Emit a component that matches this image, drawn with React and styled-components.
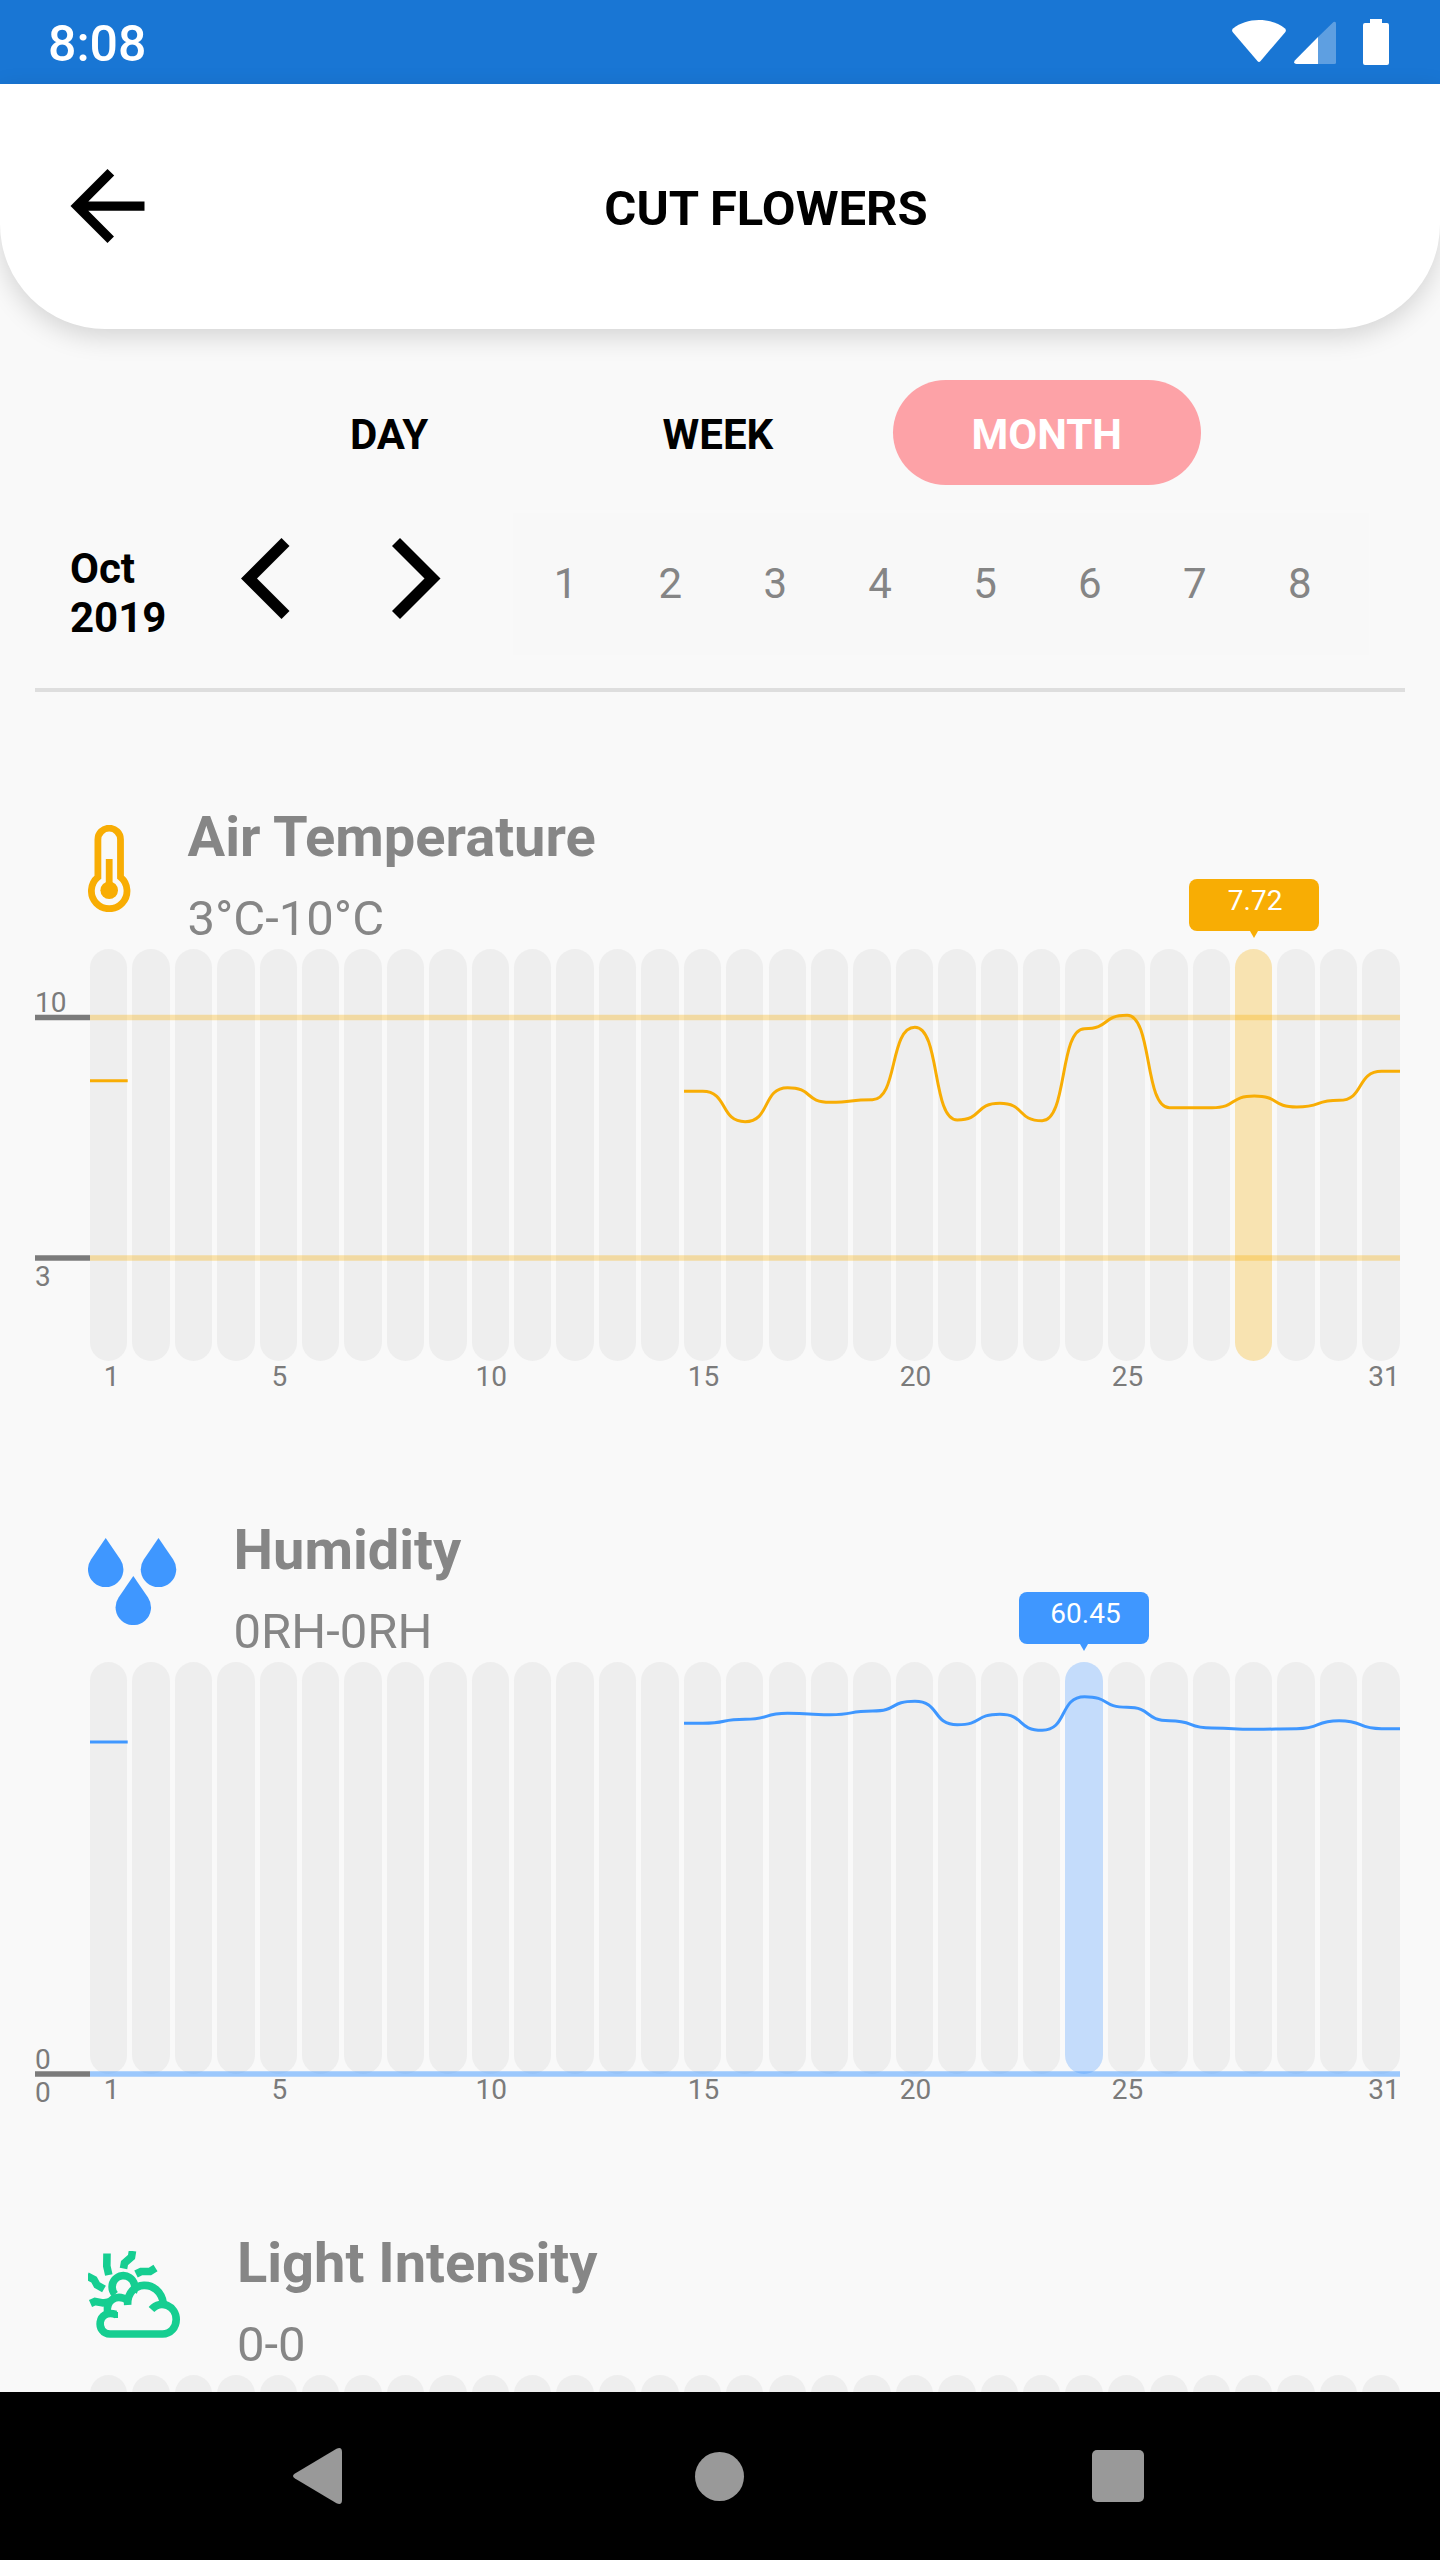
import React from 'react';
import styled, { createGlobalStyle } from 'styled-components';

const BAR_PITCH = 42.43;
const BAR_WIDTH = 37.4;
const PLOT_WIDTH = 1310.3;
const PLOT_HEIGHT = 412;

const GlobalStyle = createGlobalStyle`
  * {
    box-sizing: border-box;
  }

  body {
    margin: 0;
    background: #f9f9f9;
    font-family: Roboto, 'Liberation Sans', sans-serif;
  }

  svg {
    display: block;
    flex-shrink: 0;
  }
`;

const Screen = styled.div`
  display: flex;
  flex-direction: column;
  width: 1440px;
  height: 2560px;
  overflow: hidden;
  background: #f9f9f9;
`;

const StatusBar = styled.div`
  display: flex;
  flex-shrink: 0;
  justify-content: space-between;
  height: 84px;
  padding: 0 51px 0 48px;
  color: #fff;
  background: #1976d4;
`;

const Clock = styled.div`
  padding-top: 15px;
  font-size: 50px;
  font-weight: 500;
  line-height: 58px;
`;

const StatusIcons = styled.div`
  display: flex;
  gap: 8px;
  padding-top: 19px;
`;

const Header = styled.header`
  display: flex;
  align-items: center;
  flex-shrink: 0;
  height: 245px;
  padding: 0 70px 1px;
  background: #fff;
  border-radius: 0 0 105px 105px;
  box-shadow: 0 8px 26px rgba(0, 0, 0, 0.15);
`;

const HeaderTitle = styled.h1`
  flex: 1;
  margin: 5px 0 0 17px;
  font-size: 49px;
  font-weight: 700;
  line-height: 58px;
  text-align: center;
`;

const Tabs = styled.div`
  display: flex;
  flex-shrink: 0;
  gap: 20.5px;
  margin-top: 51px;
  padding-left: 235px;
`;

const Tab = styled.div`
  width: 308.3px;
  height: 105px;
  padding-top: 1px;
  border-radius: 53px;
  color: ${({ $active }) => ($active ? '#fff' : '#000')};
  background: ${({ $active }) => ($active ? '#fda2a7' : 'transparent')};
  font-size: 42px;
  font-weight: 700;
  line-height: 108px;
  text-align: center;
`;

const DateBar = styled.div`
  display: flex;
  flex-shrink: 0;
  height: 207px;
  margin: 0 35px;
  border-bottom: 4px solid #dedede;
  padding: 28px 0 0 35px;
`;

const Month = styled.div`
  width: 171px;
  padding-top: 31px;
  font-size: 42px;
  font-weight: 700;
  line-height: 49px;
`;

const MonthArrows = styled.div`
  display: flex;
  gap: 102px;
  width: 272px;
  padding-top: 25px;
`;

const Days = styled.div`
  display: flex;
  width: 856px;
  height: 142px;
  background: #f8f8f8;
`;

const DayNumber = styled.div`
  width: 104.9px;
  padding-top: 46px;
  color: #858585;
  font-size: 42px;
  line-height: 50px;
  text-align: center;
`;

const Content = styled.main`
  flex: 1;
  min-height: 0;
  overflow: hidden;
`;

const Section = styled.section`
  height: 713px;
`;

const SectionHead = styled.div`
  display: flex;
  align-items: flex-start;
  gap: 57px;
  height: 257px;
  padding: 112px 0 0 88px;
  color: #868686;

  & > svg {
    margin-top: 21px;
  }
`;

const SectionTitle = styled.h2`
  margin: 0;
  font-size: 56px;
  font-weight: 700;
  line-height: 66px;
`;

const SectionRange = styled.div`
  margin-top: 20px;
  font-size: 49px;
  line-height: 58px;
`;

const Plot = styled.div`
  position: relative;
  width: ${PLOT_WIDTH}px;
  height: ${PLOT_HEIGHT}px;
  margin-left: 90px;
`;

const Columns = styled.div`
  display: grid;
  grid-template-columns: repeat(31, ${BAR_WIDTH}px);
  column-gap: ${BAR_PITCH - BAR_WIDTH}px;
`;

const Bar = styled.div`
  position: relative;
  height: ${PLOT_HEIGHT}px;
  border-radius: 19px;
  background: ${({ $fill }) => $fill || '#eee'};
`;

const Overlay = styled.svg`
  position: absolute;
  top: 0;
  left: -55px;
`;

const LimitLabel = styled.div`
  position: absolute;
  left: -55px;
  color: #7b7b7b;
  font-size: 28px;
  line-height: 32px;
`;

const Tooltip = styled.div`
  position: absolute;
  top: -70px;
  left: 50%;
  width: 130px;
  height: 52px;
  margin-left: -65px;
  border-radius: 8px;
  color: #fff;
  background: ${({ $color }) => $color};
  font-size: 28px;
  line-height: 43px;
  text-align: center;
  text-indent: 3px;

  &::after {
    content: '';
    position: absolute;
    top: 52px;
    left: 61px;
    border: 4px solid transparent;
    border-top: 7px solid ${({ $color }) => $color};
    border-bottom: 0;
  }
`;

const AxisLabel = styled.div`
  display: flex;
  justify-content: center;
  padding-left: ${({ $edge }) => ($edge ? 6 : 2)}px;
  color: #7b7b7b;
  font-size: 28px;
  line-height: 32px;
`;

const Axis = styled(Columns)`
  width: ${PLOT_WIDTH}px;
  margin-left: 90px;
`;

const NavBar = styled.nav`
  display: flex;
  align-items: center;
  flex-shrink: 0;
  height: 168px;
  padding-left: 293px;
  background: #000;
`;

const HomeButton = styled.div`
  width: 49px;
  height: 49px;
  margin: 0 348px 0 353px;
  border-radius: 50%;
  background: #999;
`;

const RecentsButton = styled.div`
  width: 52px;
  height: 52px;
  border-radius: 5px;
  background: #999;
`;

const WifiIcon = () => (
  <svg width="54" height="46" viewBox="0 0 54 46" fill="#fff">
    <path d="M1 9.5C8 4 17 1 27 1s19 3 26 8.5q1.6 1.5.4 3.4L28.6 42q-1.6 1.8-3.2 0L.6 12.9Q-.6 11 1 9.5z" />
  </svg>
);

const SignalIcon = () => (
  <svg width="43" height="46" viewBox="0 0 43 46" fill="#fff">
    <path d="M24 18V45H2.5Q-1 44.5.8 41.5z" />
    <path d="M24 18L39.5 3Q42 2 42 4.5V43.5q0 1.5-1.5 1.5H24z" opacity="0.3" />
  </svg>
);

const BatteryIcon = () => (
  <svg width="44" height="46" viewBox="-18 0 44 46" fill="#fff">
    <path d="M7 0h12v4h5q2 0 2 2v38q0 2-2 2H2q-2 0-2-2V6q0-2 2-2h5z" />
  </svg>
);

const BackIcon = () => (
  <svg width="75" height="74" viewBox="85 85 342 342">
    <path d="M427 234.625H167.296l119.702-119.702L256 85 85 256l171 171 29.922-29.924-118.626-119.701H427v-42.75z" />
  </svg>
);

const ChevronLeft = () => (
  <svg width="49" height="81" viewBox="0 0 49 81">
    <path d="M40.5 0L48.5 8 16 40.5 48.5 73 40.5 81 0 40.5z" />
  </svg>
);

const ChevronRight = () => (
  <svg width="49" height="81" viewBox="0 0 49 81">
    <path d="M8 0L0 8 32.5 40.5 0 73 8 81 48.5 40.5z" />
  </svg>
);

const ThermometerIcon = () => (
  <svg width="42.5" height="87" viewBox="0 0 42.5 87" fill="none" stroke="#f8ad04">
    <path d="M9.9 52.2V14.5a11.3 11.3 0 0 1 22.6 0V52.2A17.8 17.8 0 1 1 9.9 52.2z" strokeWidth="6.8" />
    <path d="M21.2 34v30" strokeWidth="6.8" />
    <circle cx="21.2" cy="65.3" r="8.8" fill="#f8ad04" stroke="none" />
  </svg>
);

const DropsIcon = () => (
  <svg width="88.5" height="87" viewBox="0 0 88.5 87" fill="#3f97ff">
    <path d="M17.7 0L3 21.5A17.7 17.7 0 1 0 32.4 21.5z" />
    <path d="M70.5 0L55.8 21.5A17.7 17.7 0 1 0 85.2 21.5z" />
    <path d="M45.3 38L30.6 59.5A17.7 17.7 0 1 0 60 59.5z" />
  </svg>
);

const SunCloudIcon = () => (
  <svg width="92" height="87" viewBox="0 0 92 87" fill="none" stroke="#16ce91" strokeWidth="7.6">
    <path d="M19 2.5L18.8 15 20.8 24" />
    <path d="M44.5 0L43.5 6 36.5 12 35.5 17.5" />
    <path d="M48 23L53 20.5 62 20.5 67.5 17" />
    <path d="M-1 25L6 28.5 9 34 16 38" />
    <path d="M2.5 52.5L7 50.5 15 52 21 51" />
    <path d="M27 43.5A11.3 11.3 0 1 1 45.5 41" />
    <path d="M19.5 61C18 50 28 42 40 49.5" />
    <path d="M39.7 54C38.5 29 72 27 75.5 53" />
    <path d="M63.5 58.5C73 48 88.2 55 88.2 68.5c0 8-5.7 14.5-13.7 14.5H22C7.5 83 8.5 57.5 28 63.5" />
    <path d="M28.5 67V61" strokeWidth="3" />
  </svg>
);

const PreviousIcon = () => (
  <svg width="49" height="56" viewBox="0 0 49 56" fill="#999">
    <path d="M2 25.5L43.5.8Q49-1.5 49 4V52q0 5.5-5.5 3.2L2 30.5Q-2 28 2 25.5z" />
  </svg>
);

// y is given in pixels from the top of the plot
const temperature = [
  142.3, 172.7, 138.7, 153.3, 150.7, 78.3, 171, 154.3, 171.7, 79.7, 66.3, 158.7,
  158.7, 147, 158, 151.3, 122.3,
];

const humidity = [
  61.3, 57.3, 51.3, 52.7, 49, 39.3, 62.7, 52.3, 68.3, 34.7, 45.3, 58.7, 66, 67.3,
  66.7, 58.7, 66.7,
];

const sensors = [
  {
    title: 'Air Temperature',
    range: '3°C-10°C',
    Icon: ThermometerIcon,
    color: '#f8ad04',
    highlight: '#f8e3b1',
    first: 131.7,
    points: temperature,
    selected: 28,
    value: '7.72',
    max: { label: '10', y: 68.5 },
    min: { label: '3', y: 309 },
    limitOpacity: 0.32,
  },
  {
    title: 'Humidity',
    range: '0RH-0RH',
    Icon: DropsIcon,
    color: '#3f97ff',
    highlight: '#c4dcfb',
    first: 80,
    points: humidity,
    selected: 24,
    value: '60.45',
    max: { label: '0', y: 412 },
    min: { label: '0', y: 412 },
    limitOpacity: 0.5,
  },
  {
    title: 'Light Intensity',
    range: '0-0',
    Icon: SunCloudIcon,
  },
];

const dayNumbers = Array.from({ length: 31 }, (_, i) => i + 1);
const axisDays = [1, 5, 10, 15, 20, 25, 31];

const centerOf = (day) => 55 + (day - 1) * BAR_PITCH + BAR_WIDTH / 2;

const linePath = (points, startDay) => {
  const bend = BAR_PITCH * 0.6;
  let d = `M${centerOf(startDay) - BAR_WIDTH / 2} ${points[0]}H${centerOf(startDay)}`;
  points.slice(1).forEach((y, i) => {
    const x0 = centerOf(startDay + i);
    const x1 = centerOf(startDay + i + 1);
    d += `C${x0 + bend} ${points[i]} ${x1 - bend} ${y} ${x1} ${y}`;
  });
  return `${d}h${BAR_WIDTH / 2}`;
};

const ChartLines = ({ sensor }) => {
  const { color, first, points, max, min, limitOpacity } = sensor;
  const limits = max.y === min.y ? [max] : [max, min];

  return (
    <Overlay width={PLOT_WIDTH + 55} height={PLOT_HEIGHT + 6} fill="none">
      {limits.map(({ y }) => (
        <g key={y} strokeWidth="5.4">
          <path d={`M0 ${y}h55`} stroke="#7b7b7b" />
          <path d={`M55 ${y}h${PLOT_WIDTH}`} stroke={color} strokeOpacity={limitOpacity} />
        </g>
      ))}
      <path d={`M55 ${first}h37.7`} stroke={color} strokeWidth="3" />
      <path d={linePath(points, 15)} stroke={color} strokeWidth="3" />
    </Overlay>
  );
};

const Chart = ({ sensor }) => {
  const { color, highlight, points, selected, value, max, min } = sensor;

  return (
    <>
      <Plot>
        <Columns>
          {dayNumbers.map((day) => (
            <Bar key={day} $fill={day === selected ? highlight : undefined}>
              {day === selected && <Tooltip $color={color}>{value}</Tooltip>}
            </Bar>
          ))}
        </Columns>
        {points && (
          <>
            <ChartLines sensor={sensor} />
            <LimitLabel style={{ top: max.y - 30.5 }}>{max.label}</LimitLabel>
            <LimitLabel style={{ top: min.y + 2.5 }}>{min.label}</LimitLabel>
          </>
        )}
      </Plot>
      {points && (
        <Axis>
          {dayNumbers.map((day) => (
            <AxisLabel key={day} $edge={day === 1 || day === 31}>
              {axisDays.includes(day) ? day : ''}
            </AxisLabel>
          ))}
        </Axis>
      )}
    </>
  );
};

const App = () => {
  return (
    <>
      <GlobalStyle />
      <Screen>
        <StatusBar>
          <Clock>8:08</Clock>
          <StatusIcons>
            <WifiIcon />
            <SignalIcon />
            <BatteryIcon />
          </StatusIcons>
        </StatusBar>
        <Header>
          <BackIcon />
          <HeaderTitle>CUT FLOWERS</HeaderTitle>
        </Header>
        <Tabs>
          <Tab>DAY</Tab>
          <Tab>WEEK</Tab>
          <Tab $active>MONTH</Tab>
        </Tabs>
        <DateBar>
          <Month>
            Oct
            <br />
            2019
          </Month>
          <MonthArrows>
            <ChevronLeft />
            <ChevronRight />
          </MonthArrows>
          <Days>
            {dayNumbers.slice(0, 8).map((day) => (
              <DayNumber key={day}>{day}</DayNumber>
            ))}
          </Days>
        </DateBar>
        <Content>
          {sensors.map((sensor) => (
            <Section key={sensor.title}>
              <SectionHead>
                <sensor.Icon />
                <div>
                  <SectionTitle>{sensor.title}</SectionTitle>
                  <SectionRange>{sensor.range}</SectionRange>
                </div>
              </SectionHead>
              <Chart sensor={sensor} />
            </Section>
          ))}
        </Content>
        <NavBar>
          <PreviousIcon />
          <HomeButton />
          <RecentsButton />
        </NavBar>
      </Screen>
    </>
  );
};

export default App;
